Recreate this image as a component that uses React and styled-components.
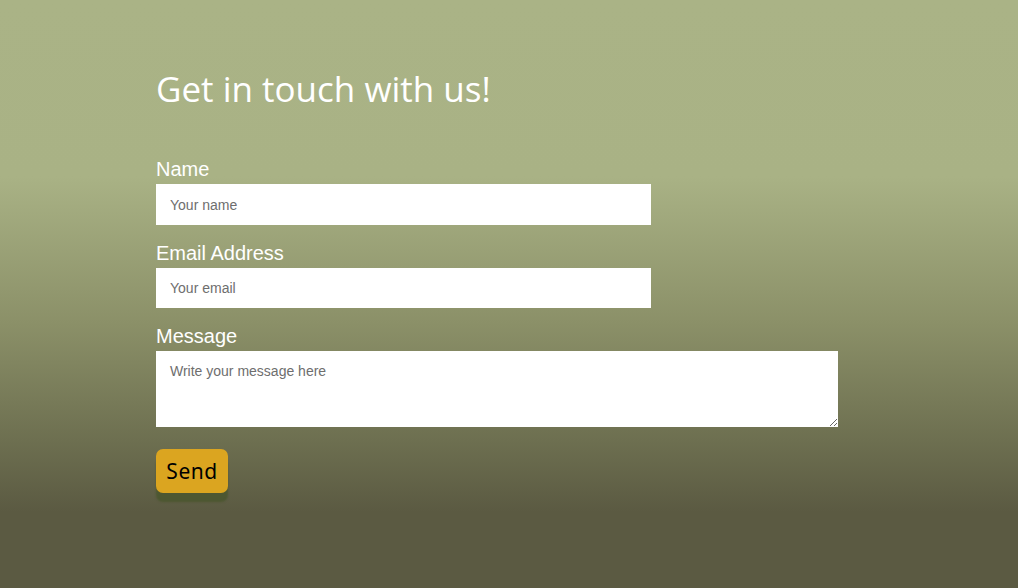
import React from "react";
import styled, { createGlobalStyle } from "styled-components";

const GlobalStyle = createGlobalStyle`
  html, body {
    margin: 0;
    padding: 0;
    height: 100%;
  }
  body {
    font-family: "Liberation Sans", Arial, sans-serif;
  }
  #root {
    min-height: 100%;
  }
`;

const Page = styled.div`
  min-height: 588px;
  box-sizing: border-box;
  padding: 66px 0 0 156px;
  background: linear-gradient(
    to bottom,
    #aab386 0%,
    #a9b285 30%,
    #8b9068 55%,
    #6d6f50 75%,
    #5b5a42 87%,
    #5b5a42 100%
  );
`;

const Heading = styled.h1`
  margin: 0 0 46px;
  font-family: "Open Sans", "Noto Sans", sans-serif;
  font-weight: 400;
  font-size: 35px;
  line-height: 46px;
  color: #ffffff;
`;

const Form = styled.form`
  display: flex;
  flex-direction: column;
  align-items: flex-start;
`;

const Label = styled.label`
  display: block;
  margin-bottom: 3px;
  font-size: 20px;
  line-height: 23px;
  color: #ffffff;
`;

const Field = styled.input`
  box-sizing: border-box;
  width: ${p => p.$width}px;
  height: ${p => p.$height}px;
  margin: 0 0 17px;
  padding: 0 14px;
  border: none;
  outline: none;
  background: #ffffff;
  font-family: "Liberation Sans", Arial, sans-serif;
  font-size: 14px;
  color: #333;

  &::placeholder {
    color: #6e6e6e;
  }
`;

const TextArea = styled.textarea`
  box-sizing: border-box;
  width: 682px;
  height: 76px;
  margin: 0 0 22px;
  padding: 12px 14px;
  border: none;
  outline: none;
  background: #ffffff;
  font-family: "Liberation Sans", Arial, sans-serif;
  font-size: 14px;
  color: #333;

  &::placeholder {
    color: #6e6e6e;
  }
`;

const SendButton = styled.button`
  width: 72px;
  height: 44px;
  padding: 0;
  border: none;
  border-radius: 7px;
  background: #dba520;
  color: #000000;
  font-family: "Noto Sans", "Open Sans", sans-serif;
  font-size: 21px;
  letter-spacing: 0.5px;
  cursor: pointer;
  box-shadow: 0 9px 2px rgba(70, 84, 42, 0.7);
`;

const App = () => {
  return (
    <Page>
      <GlobalStyle />
      <Heading>Get in touch with us!</Heading>
      <Form onSubmit={e => e.preventDefault()}>
        <Label htmlFor="name">Name</Label>
        <Field id="name" type="text" placeholder="Your name" $width={495} $height={41} />
        <Label htmlFor="email">Email Address</Label>
        <Field id="email" type="email" placeholder="Your email" $width={495} $height={40} />
        <Label htmlFor="message">Message</Label>
        <TextArea id="message" placeholder="Write your message here" />
        <SendButton type="submit">Send</SendButton>
      </Form>
    </Page>
  );
};

export default App;
